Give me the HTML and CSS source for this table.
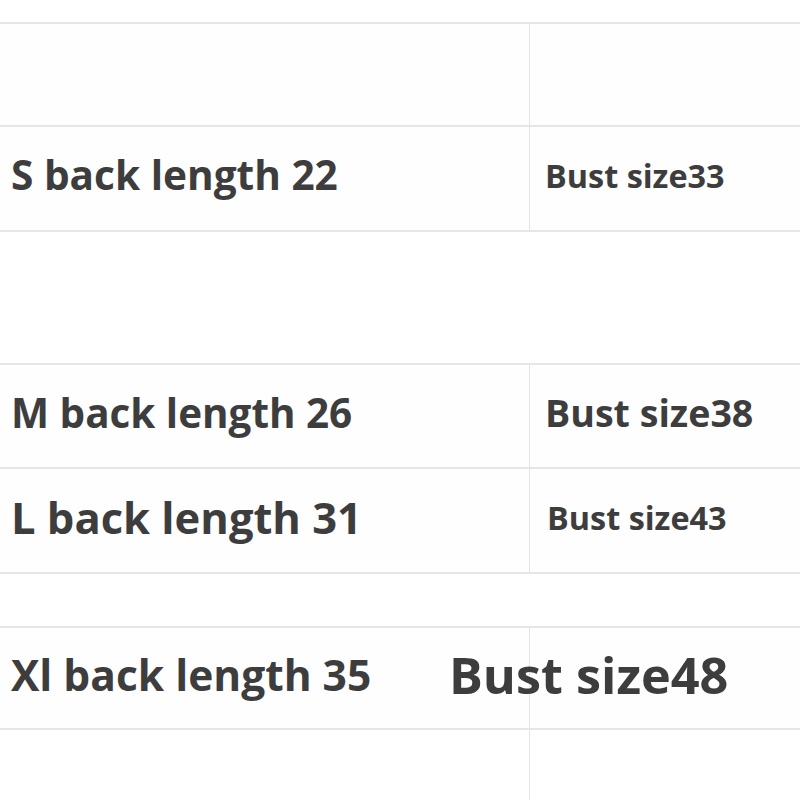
FILE: index.html
```html
<!DOCTYPE html>
<html lang="en">
<head>
<meta charset="utf-8">
<title>Size chart</title>
<link rel="stylesheet" href="styles.css">
</head>
<body>
<main class="sheet">
  <div class="lead"></div>
  <section class="group">
    <div class="row row-empty h101">
      <div class="cell cell-left"></div>
      <div class="cell cell-right"></div>
    </div>
    <div class="row h103">
      <div class="cell cell-left"><span class="label s-s">S back length 22</span></div>
      <div class="cell cell-right"><span class="label b-33">Bust size33</span></div>
    </div>
  </section>
  <div class="gap gap-lg"></div>
  <section class="group">
    <div class="row h102">
      <div class="cell cell-left"><span class="label s-m">M back length 26</span></div>
      <div class="cell cell-right"><span class="label b-38">Bust size38</span></div>
    </div>
    <div class="row h103">
      <div class="cell cell-left"><span class="label s-l">L back length 31</span></div>
      <div class="cell cell-right"><span class="label b-43">Bust size43</span></div>
    </div>
  </section>
  <div class="gap gap-sm"></div>
  <section class="group">
    <div class="row h100">
      <div class="cell cell-left"><span class="label s-xl">Xl back length 35</span></div>
      <div class="cell cell-right"><span class="label b-48">Bust size48</span></div>
    </div>
    <div class="row row-open h70">
      <div class="cell cell-left"></div>
      <div class="cell cell-right"></div>
    </div>
  </section>
</main>
</body>
</html>
```
FILE: styles.css
```css
* { box-sizing: border-box; }
html, body { margin: 0; padding: 0; background: #ffffff; }
body {
  width: 800px;
  height: 800px;
  overflow: hidden;
  font-family: "Open Sans", "Noto Sans", "DejaVu Sans", sans-serif;
  font-weight: 700;
  color: #3d3d3d;
}
.sheet { display: flex; flex-direction: column; }
.lead { height: 22px; }
.gap-lg { height: 131px; }
.gap-sm { height: 52px; }
.group { border-top: 2px solid #e6e6e6; display: flex; flex-direction: column; }
.row {
  display: grid;
  grid-template-columns: 529px 1fr;
  border-bottom: 2px solid #e6e6e6;
  background: #fefefe;
}
.row-open { border-bottom: none; background: #ffffff; }
.h70 { height: 70px; }
.h100 { height: 102px; }
.h101 { height: 103px; }
.h102 { height: 104px; }
.h103 { height: 105px; }
.cell { display: flex; align-items: center; white-space: nowrap; padding-bottom: 6px; }
.cell-left { padding-left: 11px; }
.cell-right { border-left: 1px solid #e4e4e4; padding-left: 15px; }
.label { line-height: 1; letter-spacing: 0; }
.s-s { font-size: 40.6px; }
.s-m { font-size: 40.4px; }
.s-l { font-size: 43.5px; }
.s-xl { font-size: 42.5px; }
.b-33 { font-size: 32.4px; }
.b-38 { font-size: 37.6px; }
.b-43 { font-size: 32.4px; margin-left: 2px; }
.b-48 { font-size: 50.4px; margin-left: -96px; }
```
